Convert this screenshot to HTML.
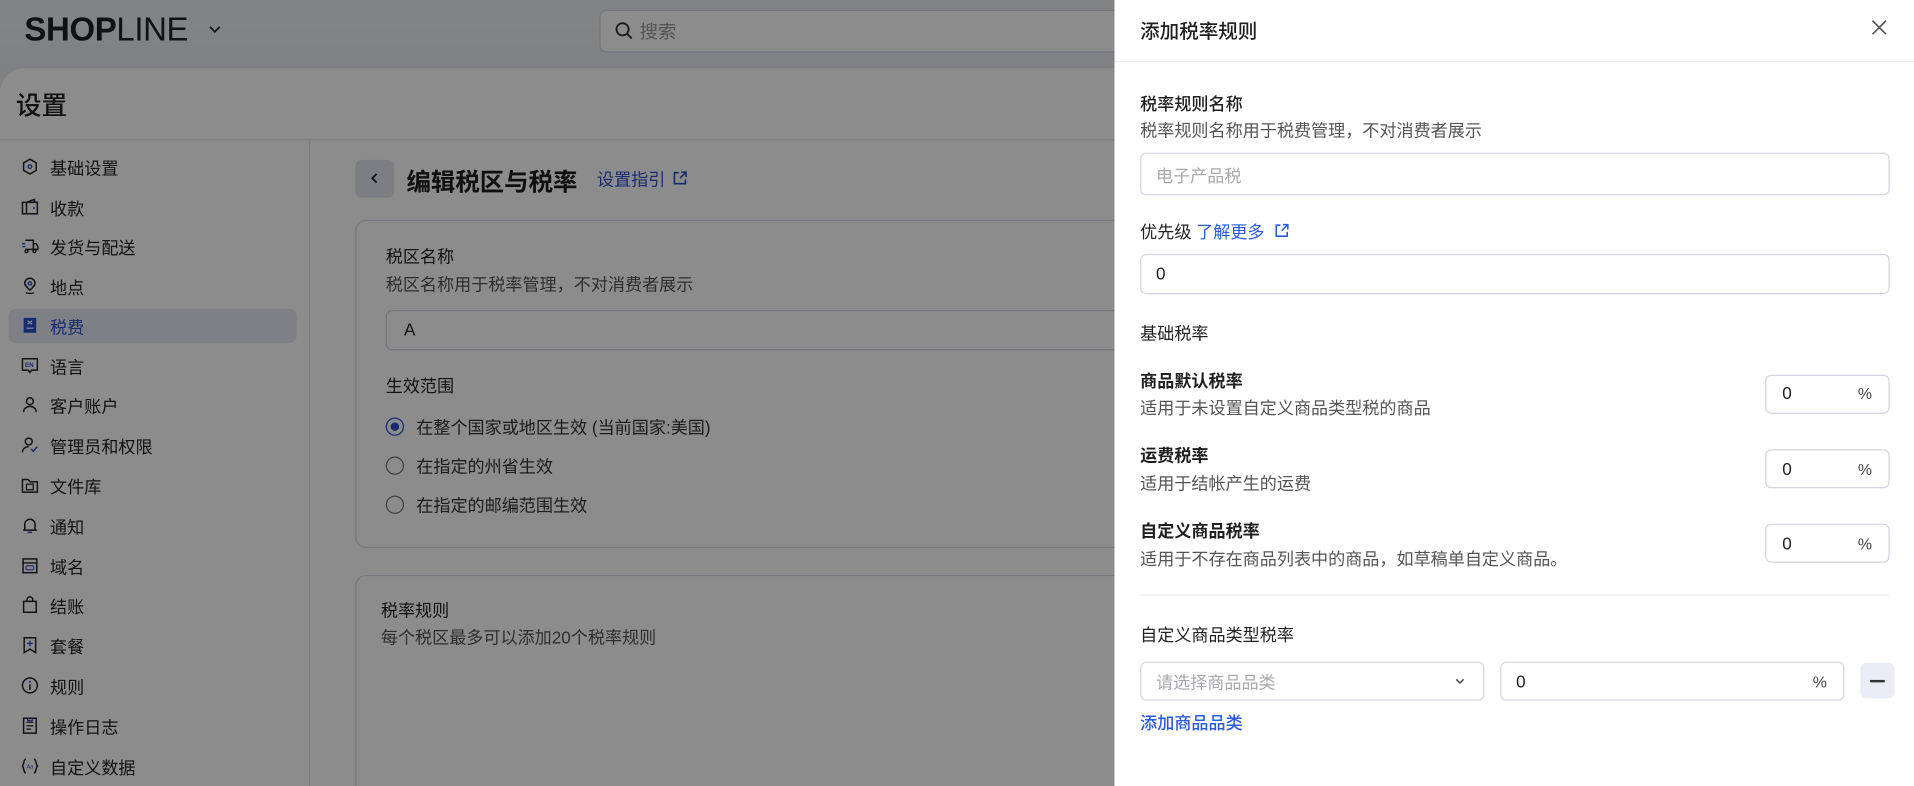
<!DOCTYPE html>
<html><head><meta charset="utf-8"><style>
*{box-sizing:border-box;margin:0;padding:0}
html,body{width:1914px;height:786px;overflow:hidden;background:#fff}
body{font-family:"Liberation Sans","Noto Sans CJK SC",sans-serif;color:#222}
#o{position:absolute;left:0;top:0;width:1914px;height:786px;overflow:hidden}
#w{position:absolute;left:0;top:0;width:1568px;height:644px;transform:scale(1.2207);transform-origin:0 0;overflow:hidden}
.a{position:absolute;white-space:nowrap}
.top{position:absolute;left:0;top:0;width:913px;height:80px;background:linear-gradient(#eef0f5,#e6e8ee)}
.card{position:absolute;left:0;top:56px;width:913px;height:588px;background:#fff;border-top-left-radius:20px}
.nav{position:absolute;left:41px;font-size:14px;color:#222}
.ic{position:absolute;left:17px;width:15px;height:15px}
.box{position:absolute;border:1px solid #d3d6e2;border-radius:5px;background:#fff}
.blue{color:#2b5be6}
.lbl{font-size:14px;font-weight:600;color:#1f1f1f}
.sub{font-size:14px;color:#555}
.ov{position:absolute;left:0;top:0;width:913px;height:644px;background:rgba(0,0,0,.45)}
</style></head><body><div id="o"><div id="w">
<div class="top"></div>
<div class="a" style="left:20px;top:9px;font-size:27px;letter-spacing:-0.3px;color:#1d2226"><b style="font-weight:900">SHOP</b><span style="font-weight:300">LINE</span></div>
<svg class="a" style="left:170px;top:18px" width="12" height="12" viewBox="0 0 12 12"><path d="M2 4l4 4 4-4" stroke="#222" stroke-width="1.4" fill="none"/></svg>
<div class="box" style="left:491px;top:8px;width:440px;height:35px;border-radius:6px"></div>
<svg class="a" style="left:503px;top:17px" width="16" height="16" viewBox="0 0 16 16"><circle cx="7" cy="7" r="5" stroke="#333" stroke-width="1.5" fill="none"/><path d="M11 11l3.5 3.5" stroke="#333" stroke-width="1.5"/></svg>
<div class="a" style="left:524px;top:15px;font-size:15px;color:#999">搜索</div>
<div class="card"></div>
<div class="a" style="left:13px;top:71px;font-size:21px;font-weight:500;color:#222">设置</div>
<div class="a" style="left:0;top:114px;width:913px;height:1px;background:#e3e5ea"></div>
<div class="a" style="left:253px;top:114px;width:1px;height:530px;background:#e3e5ea"></div>
<div class="a" style="left:7px;top:253px;width:236px;height:28px;border-radius:6px;background:#e7eaf3"></div>
<svg class="ic" style="top:129px" viewBox="0 0 16 16"><path d="M8 1.5l5.5 3.2v6.6L8 14.5 2.5 11.3V4.7z" stroke="#222" stroke-width="1.3" fill="none"/><circle cx="8" cy="8" r="1.6" stroke="#2b4fd0" stroke-width="1.2" fill="none"/></svg>
<div class="nav" style="top:128px">基础设置</div>
<svg class="ic" style="top:162px" viewBox="0 0 16 16"><rect x="1.5" y="4" width="13" height="10" stroke="#222" stroke-width="1.3" fill="none"/><path d="M5 4v10M5 4l7-2.5V4" stroke="#222" stroke-width="1.3" fill="none"/><circle cx="11.5" cy="9" r=".9" fill="#2b4fd0"/></svg>
<div class="nav" style="top:161px">收款</div>
<svg class="ic" style="top:194px" viewBox="0 0 16 16"><path d="M4 3h7v8H4M11 6h2.5l1.5 2.5V11h-4" stroke="#222" stroke-width="1.3" fill="none"/><path d="M1 6h3M1.5 8.5h2.5" stroke="#2b4fd0" stroke-width="1.2"/><circle cx="5" cy="12.5" r="1.3" stroke="#222" stroke-width="1.2" fill="none"/><circle cx="12" cy="12.5" r="1.3" stroke="#222" stroke-width="1.2" fill="none"/></svg>
<div class="nav" style="top:193px">发货与配送</div>
<svg class="ic" style="top:227px" viewBox="0 0 16 16"><path d="M8 11.5C5 8.5 3.5 7 3.5 5.5a4.5 4.5 0 019 0c0 1.5-1.5 3-4.5 6z" stroke="#222" stroke-width="1.3" fill="none"/><circle cx="8" cy="5.5" r="1.5" stroke="#2b4fd0" stroke-width="1.2" fill="none"/><path d="M4.5 13.5c1 1 6 1 7 0" stroke="#222" stroke-width="1.2" fill="none"/></svg>
<div class="nav" style="top:226px">地点</div>
<svg class="ic" style="top:259px" viewBox="0 0 16 16"><rect x="2.5" y="1.5" width="11" height="13" fill="#2b4fd0"/><path d="M6 4l4 3M10 4L6 7M5 10.5h6" stroke="#fff" stroke-width="1"/></svg>
<div class="nav" style="top:258px;color:#2b4fd0">税费</div>
<svg class="ic" style="top:292px" viewBox="0 0 16 16"><path d="M1.5 2h13v10H9.5L8 14l-1.5-2h-5z" stroke="#222" stroke-width="1.3" fill="none"/><text x="3.7" y="9.3" font-size="5.5" font-family="Liberation Sans" font-weight="bold" fill="#2b4fd0">EN</text></svg>
<div class="nav" style="top:291px">语言</div>
<svg class="ic" style="top:324px" viewBox="0 0 16 16"><circle cx="8" cy="5" r="3" stroke="#222" stroke-width="1.3" fill="none"/><path d="M2.5 14.5c0-3 2.5-5 5.5-5s5.5 2 5.5 5" stroke="#222" stroke-width="1.3" fill="none"/></svg>
<div class="nav" style="top:323px">客户账户</div>
<svg class="ic" style="top:357px" viewBox="0 0 16 16"><circle cx="7" cy="5" r="3" stroke="#222" stroke-width="1.3" fill="none"/><path d="M1.5 14.5c0-3 2.5-5 5.5-5" stroke="#222" stroke-width="1.3" fill="none"/><path d="M9 11.5l2 2 3.5-4" stroke="#2b4fd0" stroke-width="1.3" fill="none"/></svg>
<div class="nav" style="top:356px">管理员和权限</div>
<svg class="ic" style="top:390px" viewBox="0 0 16 16"><path d="M1.5 3h5l1.5 2h6.5v9h-13z" stroke="#222" stroke-width="1.3" fill="none"/><path d="M5 7h6v5H5z" stroke="#222" stroke-width="1.1" fill="none"/></svg>
<div class="nav" style="top:389px">文件库</div>
<svg class="ic" style="top:423px" viewBox="0 0 16 16"><path d="M3.5 12V7a4.5 4.5 0 019 0v5h1.5H2z" stroke="#222" stroke-width="1.3" fill="none"/><path d="M6 14h4" stroke="#2b4fd0" stroke-width="1.4"/></svg>
<div class="nav" style="top:422px">通知</div>
<svg class="ic" style="top:456px" viewBox="0 0 16 16"><rect x="2" y="2" width="12" height="12" stroke="#222" stroke-width="1.3" fill="none"/><path d="M2 5.5h12" stroke="#222" stroke-width="1.2"/><rect x="4.5" y="8" width="7" height="3.5" rx="1.5" stroke="#2b4fd0" stroke-width="1" fill="none"/></svg>
<div class="nav" style="top:455px">域名</div>
<svg class="ic" style="top:488px" viewBox="0 0 16 16"><path d="M2.5 5h11v9.5h-11z" stroke="#222" stroke-width="1.3" fill="none"/><path d="M5.5 5V3.5a2.5 2.5 0 015 0V5" stroke="#222" stroke-width="1.3" fill="none"/></svg>
<div class="nav" style="top:487px">结账</div>
<svg class="ic" style="top:521px" viewBox="0 0 16 16"><path d="M3 1.5h10v13l-5-3-5 3z" stroke="#222" stroke-width="1.3" fill="none"/><path d="M8 4v5M5.5 6.5h5" stroke="#2b4fd0" stroke-width="1.2"/></svg>
<div class="nav" style="top:520px">套餐</div>
<svg class="ic" style="top:554px" viewBox="0 0 16 16"><circle cx="8" cy="8" r="6.5" stroke="#222" stroke-width="1.3" fill="none"/><path d="M8 7v5" stroke="#222" stroke-width="1.3"/><circle cx="8" cy="4.8" r=".9" fill="#2b4fd0"/></svg>
<div class="nav" style="top:553px">规则</div>
<svg class="ic" style="top:587px" viewBox="0 0 16 16"><path d="M2.5 1.5h11v13h-11z" stroke="#222" stroke-width="1.3" fill="none"/><path d="M5 5h6M5 8h6M5 11h4" stroke="#222" stroke-width="1.1"/><path d="M6 1.5v2h4v-2" stroke="#2b4fd0" stroke-width="1.1" fill="none"/></svg>
<div class="nav" style="top:586px">操作日志</div>
<svg class="ic" style="top:620px" viewBox="0 0 16 16"><path d="M4.5 2C2.5 2 3 6 1.5 8 3 10 2.5 14 4.5 14M11.5 2c2 0 1.5 4 3 6-1.5 2-1 6-3 6" stroke="#222" stroke-width="1.3" fill="none"/><text x="5" y="10" font-size="5" font-family="Liberation Sans" fill="#2b4fd0">Aa</text></svg>
<div class="nav" style="top:619px">自定义数据</div>
<div class="a" style="left:291px;top:131px;width:32px;height:31px;border-radius:5px;background:#e3e6ee"></div>
<svg class="a" style="left:301px;top:140px" width="12" height="12" viewBox="0 0 12 12"><path d="M7.5 2.5L4 6l3.5 3.5" stroke="#222" stroke-width="1.5" fill="none"/></svg>
<div class="a" style="left:333px;top:133px;font-size:20px;font-weight:600;color:#1d1d1d">编辑税区与税率</div>
<div class="a blue" style="left:489px;top:137px;font-size:14px;color:#2b4fd0">设置指引</div>
<svg class="a" style="left:550px;top:139px" width="14" height="14" viewBox="0 0 14 14"><path d="M6 2.5H2.5v9h9V8M8 2h4v4M12 2L7 7" stroke="#2b4fd0" stroke-width="1.3" fill="none"/></svg>
<div class="box" style="left:291px;top:180px;width:700px;height:269px;border-radius:9px;border-color:#d8dbe3"></div>
<div class="a sub" style="left:316px;top:200px;color:#222">税区名称</div>
<div class="a sub" style="left:316px;top:223px">税区名称用于税率管理，不对消费者展示</div>
<div class="box" style="left:316px;top:254px;width:650px;height:33px"></div>
<div class="a" style="left:331px;top:262px;font-size:14px">A</div>
<div class="a sub" style="left:316px;top:306px;color:#222">生效范围</div>
<div class="a" style="left:316px;top:342px;width:15px;height:15px;border-radius:50%;border:1.5px solid #2b4fd0"></div>
<div class="a" style="left:320px;top:346px;width:7px;height:7px;border-radius:50%;background:#2b4fd0"></div>
<div class="a sub" style="left:341px;top:340px;color:#333">在整个国家或地区生效 (当前国家:美国)</div>
<div class="a" style="left:316px;top:374px;width:15px;height:15px;border-radius:50%;border:1.5px solid #777"></div>
<div class="a sub" style="left:341px;top:372px;color:#333">在指定的州省生效</div>
<div class="a" style="left:316px;top:406px;width:15px;height:15px;border-radius:50%;border:1.5px solid #777"></div>
<div class="a sub" style="left:341px;top:404px;color:#333">在指定的邮编范围生效</div>
<div class="box" style="left:291px;top:471px;width:700px;height:300px;border-radius:9px;border-color:#d8dbe3"></div>
<div class="a sub" style="left:312px;top:490px;color:#222">税率规则</div>
<div class="a sub" style="left:312px;top:512px">每个税区最多可以添加20个税率规则</div>
<div class="ov"></div>
<div class="a" style="left:913px;top:0;width:655px;height:644px;background:#fff"></div>
<div class="a" style="left:934px;top:12px;font-size:16px;font-weight:500;color:#1f1f1f">添加税率规则</div>
<svg class="a" style="left:1532px;top:15px" width="15" height="15" viewBox="0 0 15 15"><path d="M2 2l11 11M13 2L2 13" stroke="#555" stroke-width="1.4"/></svg>
<div class="a" style="left:913px;top:50px;width:655px;height:1px;background:#eceef2"></div>
<div class="a lbl" style="left:934px;top:75px;font-weight:500">税率规则名称</div>
<div class="a sub" style="left:934px;top:97px">税率规则名称用于税费管理，不对消费者展示</div>
<div class="box" style="left:934px;top:125px;width:614px;height:35px"></div>
<div class="a" style="left:947px;top:134px;font-size:14px;color:#a8a8b0">电子产品税</div>
<div class="a sub" style="left:934px;top:180px;color:#222">优先级 <span class="blue">了解更多</span></div>
<svg class="a" style="left:1043px;top:182px" width="14" height="14" viewBox="0 0 14 14"><path d="M6 2.5H2.5v9h9V8M8 2h4v4M12 2L7 7" stroke="#2b5be6" stroke-width="1.3" fill="none"/></svg>
<div class="box" style="left:934px;top:208px;width:614px;height:33px"></div>
<div class="a" style="left:947px;top:216px;font-size:14px">0</div>
<div class="a sub" style="left:934px;top:263px;color:#222">基础税率</div>
<div class="a lbl" style="left:934px;top:302px">商品默认税率</div>
<div class="a sub" style="left:934px;top:324px">适用于未设置自定义商品类型税的商品</div>
<div class="box" style="left:1446px;top:307px;width:102px;height:32px"></div>
<div class="a" style="left:1460px;top:314px;font-size:14px">0</div><div class="a" style="left:1522px;top:315px;font-size:13px;color:#444">%</div>
<div class="a lbl" style="left:934px;top:363px">运费税率</div>
<div class="a sub" style="left:934px;top:386px">适用于结帐产生的运费</div>
<div class="box" style="left:1446px;top:368px;width:102px;height:32px"></div>
<div class="a" style="left:1460px;top:376px;font-size:14px">0</div><div class="a" style="left:1522px;top:377px;font-size:13px;color:#444">%</div>
<div class="a lbl" style="left:934px;top:425px">自定义商品税率</div>
<div class="a sub" style="left:934px;top:448px">适用于不存在商品列表中的商品，如草稿单自定义商品。</div>
<div class="box" style="left:1446px;top:429px;width:102px;height:32px"></div>
<div class="a" style="left:1460px;top:437px;font-size:14px">0</div><div class="a" style="left:1522px;top:438px;font-size:13px;color:#444">%</div>
<div class="a" style="left:934px;top:487px;width:614px;height:1px;background:#eceef2"></div>
<div class="a sub" style="left:934px;top:510px;color:#222">自定义商品类型税率</div>
<div class="box" style="left:934px;top:542px;width:282px;height:32px"></div>
<div class="a" style="left:947px;top:549px;font-size:14px;color:#a8a8b0">请选择商品品类</div>
<svg class="a" style="left:1191px;top:553px" width="10" height="10" viewBox="0 0 10 10"><path d="M2 3.5l3 3 3-3" stroke="#444" stroke-width="1.2" fill="none"/></svg>
<div class="box" style="left:1229px;top:542px;width:282px;height:32px"></div>
<div class="a" style="left:1242px;top:550px;font-size:14px">0</div><div class="a" style="left:1485px;top:551px;font-size:13px;color:#444">%</div>
<div class="a" style="left:1524px;top:543px;width:28px;height:29px;border-radius:5px;background:#eaedf5"></div>
<div class="a" style="left:1532px;top:557px;width:12px;height:2px;background:#333"></div>
<div class="a blue" style="left:934px;top:582px;font-size:14px;font-weight:500">添加商品品类</div>
</div></div></body></html>
